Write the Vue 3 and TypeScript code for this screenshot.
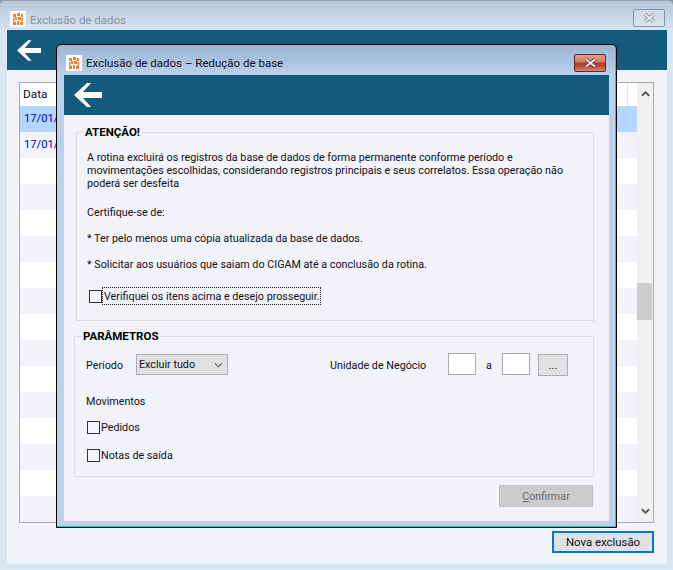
<script setup lang="ts">
const rows: { date: string }[] = Array.from({ length: 16 }, (_, i) => ({ date: i < 2 ? '17/01/2023' : '' }))
const back = 'M13 0 0 12l13 12h4L9 15h19V9H9l8-9z'
const glyph = 'M3 3h3v3H3zM7 2h3v3H7zM11 3h2v3h-2zM5 6h2v3H5zM8 6h3v3H8zM3 7h1.5v3H3zM11.5 7H13v3h-1.5zM3 10.5h3V14H3zM7 10h2v4H7zM10 10.5h3V14h-3z'
</script>

<template>
  <div class="desk">
    <header class="titlebar">
      <svg class="appicon" viewBox="0 0 16 16">
        <rect width="16" height="16" fill="#fff" />
        <path :d="glyph" fill="#f3802e" />
      </svg>
      <span class="wintitle muted">Exclusão de dados</span>
      <button class="winclose idle" aria-label="Fechar">
        <svg viewBox="0 0 13 10" width="13" height="10"><path d="M2 1.5l9 7M11 1.5l-9 7" stroke="#6f7680" stroke-width="3.4" /><path d="M2 1.5l9 7M11 1.5l-9 7" stroke="#eef0f3" stroke-width="1.8" /></svg>
      </button>
    </header>
    <div class="tealbar outerbar">
      <svg class="arrow small" viewBox="0 0 28 24"><path :d="back" fill="#fff" /></svg>
    </div>
    <main class="outerbody">
      <section class="grid">
        <div class="gridmain">
          <div class="gridhead"><span>Data</span></div>
          <div v-for="(r, i) in rows" :key="i" class="gridrow" :class="{ selected: i === 0, stripe: i % 2 === 1 }">{{ r.date }}</div>
        </div>
        <div class="scroll">
          <svg viewBox="0 0 10 7" width="9" height="7"><path d="M1 6l4-4 4 4" fill="none" stroke="#505050" stroke-width="2" /></svg>
          <span class="thumb"></span>
          <svg viewBox="0 0 10 7" width="9" height="7"><path d="M1 1l4 4 4-4" fill="none" stroke="#505050" stroke-width="2" /></svg>
        </div>
      </section>
      <div class="outerfoot"><button class="primary">Nova exclusão</button></div>
    </main>

    <div class="modal">
      <header class="modaltitle">
        <svg class="appicon" viewBox="0 0 16 16">
          <rect width="16" height="16" fill="#fff" />
          <path :d="glyph" fill="#f3802e" />
        </svg>
        <span class="wintitle">Exclusão de dados – Redução de base</span>
        <button class="winclose danger" aria-label="Fechar">
          <svg viewBox="0 0 13 10" width="13" height="10"><path d="M2 1.5l9 7M11 1.5l-9 7" stroke="#4b2a2a" stroke-width="3.4" /><path d="M2 1.5l9 7M11 1.5l-9 7" stroke="#f2f2f2" stroke-width="1.8" /></svg>
        </button>
      </header>
      <div class="tealbar modalbar">
        <svg class="arrow" viewBox="0 0 28 24"><path :d="back" fill="#fff" /></svg>
      </div>
      <div class="content">
        <fieldset class="group warn">
          <legend>ATENÇÃO!</legend>
          <div class="warnbody">
            <p>A rotina excluirá os registros da base de dados de forma permanente conforme período e<br>movimentações escolhidas, considerando registros principais e seus correlatos. Essa operação não<br>poderá ser desfeita</p>
            <p class="p2">Certifique-se de:</p>
            <p class="p3">* Ter pelo menos uma cópia atualizada da base de dados.</p>
            <p class="p3">* Solicitar aos usuários que saiam do CIGAM até a conclusão da rotina.</p>
            <label class="check verify"><input type="checkbox" /><span class="focus">Verifiquei os itens acima e desejo prosseguir.</span></label>
          </div>
        </fieldset>
        <fieldset class="group params">
          <legend>PARÂMETROS</legend>
          <div class="parambody">
            <div class="prow">
              <span class="plabel">Período</span>
              <span class="selwrap">
                <select class="sel"><option>Excluir tudo</option></select>
                <svg class="chev" viewBox="0 0 10 6" width="9" height="6"><path d="M1 1l4 4 4-4" fill="none" stroke="#555" stroke-width="1.2" /></svg>
              </span>
              <span class="unit">Unidade de Negócio</span>
              <input class="box" type="text" />
              <span class="ate">a</span>
              <input class="box" type="text" />
              <button class="dots">...</button>
            </div>
            <p class="mov">Movimentos</p>
            <label class="check ped"><input type="checkbox" /><span>Pedidos</span></label>
            <label class="check not"><input type="checkbox" /><span>Notas de saída</span></label>
          </div>
        </fieldset>
        <div class="actions"><button class="confirm" disabled><u>C</u>onfirmar</button></div>
      </div>
    </div>
  </div>
</template>

<style scoped>
.desk {
  position: relative;
  width: 673px;
  height: 570px;
  overflow: hidden;
  box-sizing: border-box;
  padding: 0 6px 6px 7px;
  display: flex;
  flex-direction: column;
  background: linear-gradient(#b8c6d8 0, #d9e5f3 30px);
  border-top: 1px solid #9aa3ae;
  border-radius: 5px 5px 0 0;
  font: 10.75px/13px Roboto, sans-serif;
  color: #101018;
}
.titlebar {
  height: 29px;
  box-sizing: border-box;
  padding: 6px 2px 0 3px;
  display: flex;
  align-items: center;
  flex: none;
}
.appicon { width: 16px; height: 16px; flex: none; }
.wintitle { font-size: 11.5px; margin-left: 4px; padding-top: 2px; }
.muted { color: #8b9098; padding-top: 4px; }
.winclose {
  margin-left: auto;
  width: 32px;
  height: 18px;
  padding: 0;
  display: flex;
  align-items: center;
  justify-content: center;
  border-radius: 2px;
}
.winclose.idle { margin-top: -2px; border: 1px solid #8295b0; background: linear-gradient(#cfd8e4, #dbe3ee); }
.winclose.danger {
  border: 1px solid #5f2a33;
  background: linear-gradient(#e39a8a 0, #d07a68 45%, #b23a20 50%, #c0503a 75%, #d98a78 100%);
}
.tealbar { background: #135a7c; flex: none; display: flex; align-items: center; }
.outerbar { height: 40px; padding-left: 10px; }
.arrow { width: 28px; height: 24px; }
.arrow.small { width: 24px; height: 21px; }
.outerbody {
  flex: 1;
  background: #f1f3f9;
  padding: 12px 13px 11px 12px;
  display: flex;
  flex-direction: column;
  min-height: 0;
}
.grid {
  height: 441px;
  flex: none;
  box-sizing: border-box;
  border: 1px solid #a9a9a9;
  background: #fff;
  display: flex;
}
.gridmain { flex: 1; overflow: hidden; }
.gridhead {
  height: 23px;
  padding-left: 3px;
  line-height: 23px;
  font-size: 11.8px;
  position: relative;
}
.gridhead::after {
  content: "";
  position: absolute;
  right: 9px;
  top: 0;
  bottom: 0;
  width: 1px;
  background: #e6e6e6;
}
.gridrow {
  height: 26px;
  line-height: 26px;
  padding-left: 4px;
  font-size: 11.2px;
  color: #0000c0;
}
.gridrow.stripe { background: #f1f3f9; }
.gridrow.selected { background: #b3d7ff; }
.scroll {
  width: 16px;
  background: #f0f0f0;
  display: flex;
  flex-direction: column;
  align-items: center;
  padding: 7px 0;
  box-sizing: border-box;
  position: relative;
  justify-content: space-between;
}
.thumb {
  position: absolute;
  left: 0;
  right: 1px;
  top: 200px;
  height: 37px;
  background: #cdcdcd;
}
.outerfoot { display: flex; justify-content: flex-end; margin-top: 8px; }
.primary {
  width: 102px;
  height: 22px;
  box-sizing: border-box;
  border: 2px solid #0078d7;
  background: #e1e1e1;
  font: inherit;
  font-size: 11.4px;
  color: #101018;
  padding: 0;
}
.modal {
  position: absolute;
  left: 56px;
  top: 43px;
  width: 561px;
  height: 484px;
  box-sizing: border-box;
  border: 1px solid #000;
  border-radius: 5px 5px 0 0;
  background: linear-gradient(#9bb4d1 0, #b9d1ea 30px);
  box-shadow: inset -1px -1px 0 #27c3e6;
  padding: 0 7px 6px 7px;
  display: flex;
  flex-direction: column;
}
.modaltitle {
  height: 30px;
  box-sizing: border-box;
  padding: 5px 3px 0 2px;
  flex: none;
  display: flex;
  align-items: center;
}
.modalbar { height: 40px; padding-left: 10px; }
.content {
  flex: 1;
  background: #f1f3f9;
  padding: 10px 15px 0 12px;
  display: flex;
  flex-direction: column;
  min-height: 0;
}
.group {
  margin: 0;
  min-width: 0;
  border: 1px solid #dcdcdc;
  padding: 0;
  display: block;
}
.group legend {
  font-weight: 700;
  font-size: 11.5px;
  line-height: 14px;
  margin-left: 7px;
  padding: 0 1px;
  color: #000;
}
.group p { margin: 0; }
.warn { height: 196px; box-sizing: border-box; }
.warnbody { padding: 12px 0 0 10px; }
.warnbody .p2 { margin-top: 16px; }
.warnbody .p3 { margin-top: 13px; }
.check { display: flex; align-items: center; cursor: default; }
.check input {
  appearance: none;
  width: 13px;
  height: 13px;
  margin: 0 1px 0 0;
  box-sizing: border-box;
  border: 1px solid #333;
  background: #f5f6fa;
  flex: none;
}
.check span { padding-top: 1px; }
.verify { margin: 17px 0 0 2px; }
.check .focus {
  outline: 1px dotted #222;
  outline-offset: 0;
  padding: 2px 0 1px 1px;
  white-space: nowrap;
}
.params { margin: 8px 0 0 -2px; height: 148px; box-sizing: border-box; }
.parambody { padding: 10px 0 0 11px; }
.prow { display: flex; align-items: center; height: 22px; }
.plabel { width: 50px; padding-top: 2px; }
.selwrap { position: relative; display: block; width: 92px; height: 21px; }
.sel {
  appearance: none;
  width: 100%;
  height: 100%;
  box-sizing: border-box;
  border: 1px solid #adadad;
  background: #e1e1e1;
  font: inherit;
  color: inherit;
  padding: 0 0 0 2px;
  border-radius: 0;
}
.chev { position: absolute; right: 5px; top: 8px; pointer-events: none; }
.unit { margin-left: 102px; width: 118px; padding-top: 2px; }
.box {
  width: 28px;
  height: 22px;
  box-sizing: border-box;
  border: 1px solid #adadad;
  background: #fff;
  padding: 0;
}
.ate { width: 26px; text-align: center; padding-top: 2px; }
.dots {
  width: 30px;
  height: 22px;
  margin-left: 8px;
  margin-top: 2px;
  box-sizing: border-box;
  border: 1px solid #adadad;
  background: #e1e1e1;
  font: inherit;
  padding: 0;
  color: #101018;
}
.group .mov { margin-top: 20px; }
.ped { margin: 12px 0 0 1px; }
.not { margin: 14px 0 0 1px; }
.actions { display: flex; justify-content: flex-end; margin-top: 8px; padding-right: 1px; }
.confirm {
  width: 94px;
  height: 22px;
  box-sizing: border-box;
  border: 1px solid #bfbfbf;
  background: #cccccc;
  color: #6d6d6d;
  font: inherit;
  padding: 0;
}
</style>

<style>
html, body { margin: 0; background: #8f97a1; }
</style>
